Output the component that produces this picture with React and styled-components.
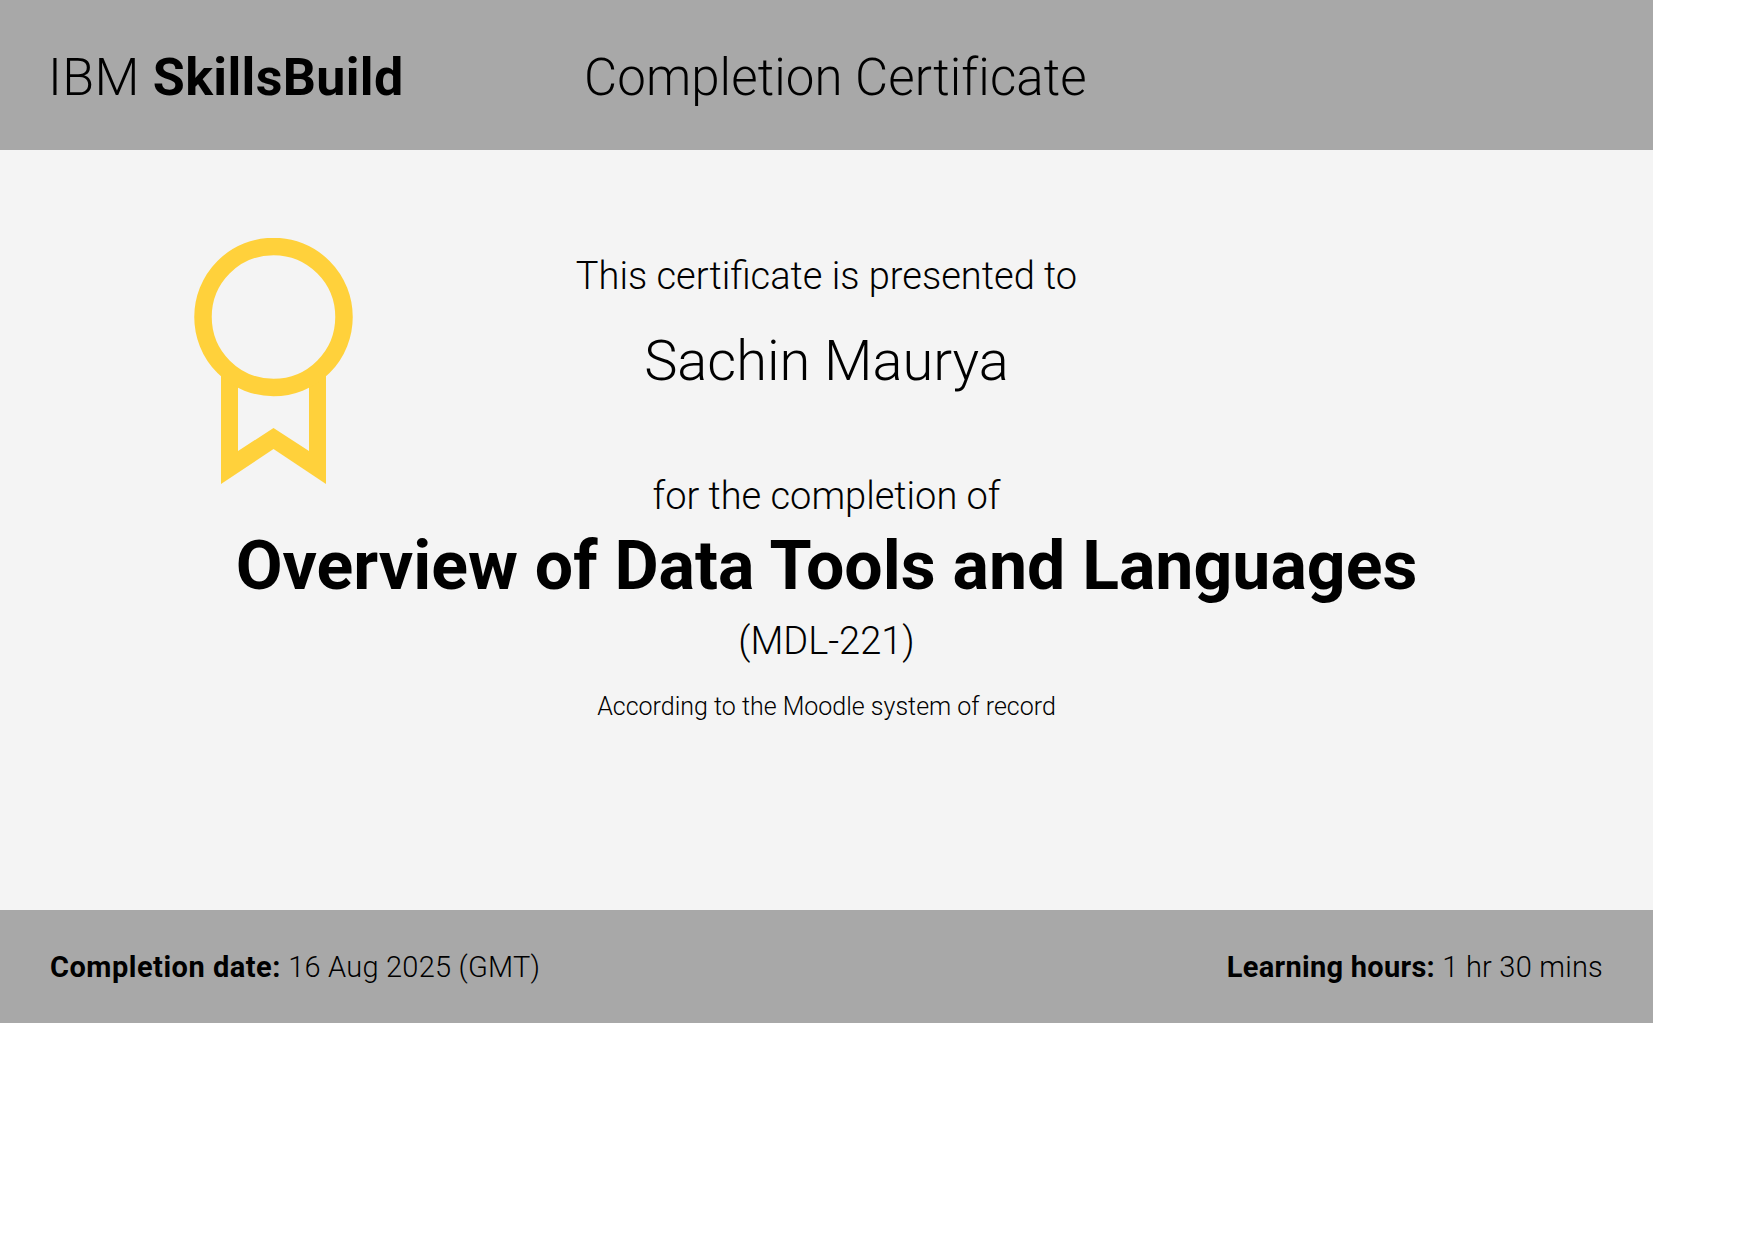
import React from "react";
import styled, { createGlobalStyle } from "styled-components";

const Global = createGlobalStyle`
  * {
    box-sizing: border-box;
  }
  html, body {
    margin: 0;
    padding: 0;
    background: #ffffff;
  }
  body {
    font-family: Roboto, "Open Sans", "Liberation Sans", sans-serif;
    color: #000000;
  }
`;

const Certificate = styled.div`
  width: 1653px;
  display: flex;
  flex-direction: column;
`;

const Header = styled.header`
  height: 150px;
  background: #a8a8a8;
  display: flex;
  align-items: center;
  padding: 4px 0 0 48px;
`;

const Logo = styled.div`
  width: 536px;
  font-size: 52px;
  font-weight: 300;
  letter-spacing: 0.35px;
  white-space: nowrap;
  b {
    font-weight: 700;
  }
`;

const CertTitle = styled.div`
  font-size: 51px;
  font-weight: 300;
  letter-spacing: 0.1px;
  white-space: nowrap;
`;

const Body = styled.main`
  height: 760px;
  background: #f4f4f4;
  display: grid;
`;

const Medal = styled.svg`
  grid-area: 1 / 1;
  align-self: start;
  margin: 88px 0 0 194px;
  width: 159px;
  height: 246px;
`;

const Content = styled.div`
  grid-area: 1 / 1;
  display: flex;
  flex-direction: column;
  align-items: center;
  padding-top: 104px;
`;

const Line = styled.div`
  font-size: ${(p) => p.$size}px;
  font-weight: ${(p) => p.$weight || 300};
  margin-top: ${(p) => p.$top || 0}px;
  line-height: 1.2;
  white-space: nowrap;
`;

const Footer = styled.footer`
  height: 113px;
  background: #a8a8a8;
  display: flex;
  align-items: center;
  justify-content: space-between;
  padding: 0 50px;
  font-size: 29px;
  font-weight: 300;
  letter-spacing: 0.22px;
`;

const Label = styled.b`
  font-weight: 700;
  letter-spacing: ${(p) => p.$spacing}px;
`;

export default function App() {
  return (
    <>
      <Global />
      <Certificate>
        <Header>
          <Logo>
            IBM <b>SkillsBuild</b>
          </Logo>
          <CertTitle>Completion Certificate</CertTitle>
        </Header>
        <Body>
          <Medal viewBox="0 0 159 246">
            <path
              fill="#ffd13b"
              d="M27 138 L27 246 L79.5 211 L132 246 L132 138 L115 138 L115 213 L79.5 190 L44 213 L44 138 Z"
            />
            <circle cx="79.5" cy="79" r="70.5" fill="none" stroke="#ffd13b" strokeWidth="17.5" />
          </Medal>
          <Content>
            <Line $size={38}>This certificate is presented to</Line>
            <Line $size={56} $top={28.5}>Sachin Maurya</Line>
            <Line $size={38} $top={79}>for the completion of</Line>
            <Line $size={68} $weight={700} $top={6}>Overview of Data Tools and Languages</Line>
            <Line $size={38} $top={12}>(MDL-221)</Line>
            <Line $size={25} $top={27}>According to the Moodle system of record</Line>
          </Content>
        </Body>
        <Footer>
          <div>
            <Label $spacing={0.5}>Completion date:</Label> 16 Aug 2025 (GMT)
          </div>
          <div>
            <Label $spacing={0.28}>Learning hours:</Label> 1 hr 30 mins
          </div>
        </Footer>
      </Certificate>
    </>
  );
}
